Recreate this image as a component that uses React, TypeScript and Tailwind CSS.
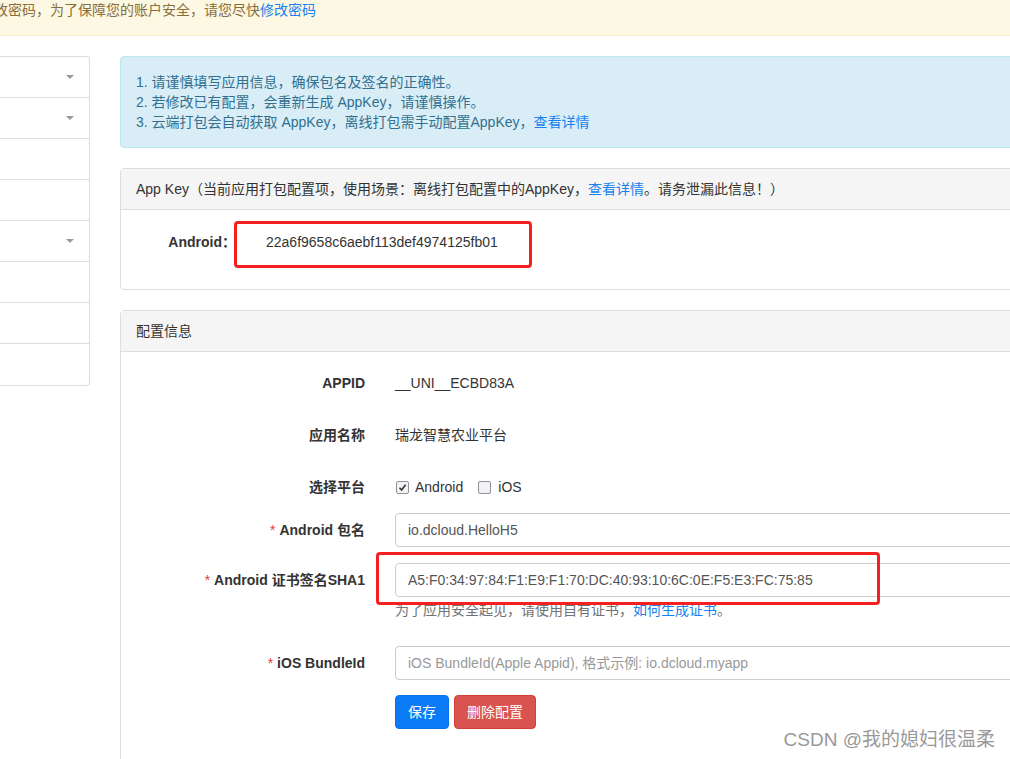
function Caret() {
  return (
    <span className="block w-0 h-0 border-x-[4px] border-x-transparent border-t-[4px] border-t-[#999]" />
  );
}

function CheckBox({ checked }: { checked?: boolean }) {
  return (
    <span className="inline-flex items-center justify-center w-[13px] h-[13px] rounded-[2px] border border-[#8f8f9d] bg-[#f2f2f2]">
      {checked && (
        <svg width="9" height="9" viewBox="0 0 9 9">
          <path d="M1.5 4.8 L3.6 7 L7.6 1.8" fill="none" stroke="#333" strokeWidth="1.6" />
        </svg>
      )}
    </span>
  );
}

const sideRows = [true, true, false, false, true, false, false, false];

export default function App() {
  return (
    <div
      className="relative w-[1010px] h-[759px] overflow-hidden bg-white text-[14px] text-[#333]"
      style={{ fontFamily: '"Liberation Sans", Arial, "Noto Sans CJK SC", sans-serif' }}
    >
      {/* warning bar */}
      <div className="h-[36px] bg-[#fcf8e3] border-b border-[#faebcc] text-[#8a6d3b] flex items-start leading-[20px] overflow-hidden whitespace-nowrap">
        <span className="-ml-[6px]">
          改密码，为了保障您的账户安全，请您尽快<span className="text-[#1782f0]">修改密码</span>
        </span>
      </div>

      <div className="flex mt-[20px] items-start">
        {/* sidebar */}
        <div className="w-[90px] shrink-0 border-r border-t border-b border-[#ddd] rounded-br-[4px] rounded-tr-[2px]">
          {sideRows.map((caret, i) => (
            <div
              key={i}
              className={`h-[41px] flex items-center justify-end pr-[15px] ${i < sideRows.length - 1 ? "border-b border-[#ddd]" : ""}`}
            >
              {caret && <Caret />}
            </div>
          ))}
        </div>

        {/* main */}
        <div className="ml-[30px] w-[1000px] shrink-0">
          <div className="bg-[#d9edf7] border border-[#bce8f1] rounded-[4px] text-[#31708f] px-[15px] py-[15px] leading-[20px]">
            <div>1. 请谨慎填写应用信息，确保包名及签名的正确性。</div>
            <div>2. 若修改已有配置，会重新生成 AppKey，请谨慎操作。</div>
            <div>
              3. 云端打包会自动获取 AppKey，离线打包需手动配置AppKey，<span className="text-[#1782f0]">查看详情</span>
            </div>
          </div>

          {/* App Key panel */}
          <div className="mt-[20px] border border-[#ddd] rounded-[4px]">
            <div className="bg-[#f5f5f5] border-b border-[#ddd] px-[15px] py-[10px] leading-[20px]">
              App Key（当前应用打包配置项，使用场景：离线打包配置中的AppKey，<span className="text-[#1782f0]">查看详情</span>。请务泄漏此信息！）
            </div>
            <div className="px-[15px] pt-[15px] pb-[30px]">
              <div className="flex items-center h-[34px]">
                <div className="w-[100px] text-right font-bold">Android：</div>
                <div className="relative ml-[30px]">
                  22a6f9658c6aebf113def4974125fb01
                  <span className="absolute left-[-32px] top-[-11px] w-[298px] h-[47px] border-[3px] border-[#f5201f] rounded-[4px]" />
                </div>
              </div>
            </div>
          </div>

          {/* config panel */}
          <div className="mt-[20px] border border-[#ddd] rounded-[4px] h-[500px]">
            <div className="bg-[#f5f5f5] border-b border-[#ddd] px-[15px] py-[10px] leading-[20px]">配置信息</div>
            <div className="px-[15px] pt-[5px]">
              <div className="flex items-center h-[52px]">
                <div className="w-[244px] pr-[15px] text-right font-bold">APPID</div>
                <div className="pl-[15px]">__UNI__ECBD83A</div>
              </div>
              <div className="flex items-center h-[52px]">
                <div className="w-[244px] pr-[15px] text-right font-bold">应用名称</div>
                <div className="pl-[15px]">瑞龙智慧农业平台</div>
              </div>
              <div className="flex items-center h-[52px]">
                <div className="w-[244px] pr-[15px] text-right font-bold">选择平台</div>
                <div className="pl-[16px] flex items-center">
                  <CheckBox checked />
                  <span className="ml-[6px]">Android</span>
                  <span className="ml-[15px] flex items-center">
                    <CheckBox />
                  </span>
                  <span className="ml-[7px]">iOS</span>
                </div>
              </div>

              <div className="flex items-center">
                <div className="w-[244px] pr-[15px] text-right font-bold">
                  <span className="text-[#e4393c] font-normal">* </span>Android 包名
                </div>
                <div className="pl-[15px] flex-1">
                  <div className="h-[34px] border border-[#ccc] rounded-[4px] px-[12px] flex items-center text-[#555]">
                    io.dcloud.HelloH5
                  </div>
                </div>
              </div>

              <div className="flex items-start mt-[16px]">
                <div className="w-[244px] pr-[15px] text-right font-bold h-[34px] flex items-center justify-end">
                  <span className="text-[#e4393c] font-normal mr-[4px]">*</span>Android 证书签名SHA1
                </div>
                <div className="pl-[15px] flex-1 relative">
                  <div className="h-[34px] border border-[#ccc] rounded-[4px] px-[12px] flex items-center text-[#555]">
                    A5:F0:34:97:84:F1:E9:F1:70:DC:40:93:10:6C:0E:F5:E3:FC:75:85
                  </div>
                  <div className="mt-[3px] leading-[20px] text-[#737373]">
                    为了应用安全起见，请使用自有证书，<span className="text-[#1782f0]">如何生成证书</span>。
                  </div>
                  <span className="absolute left-[-4px] top-[-11px] w-[504px] h-[53px] border-[3px] border-[#f5201f] rounded-[4px]" />
                </div>
              </div>

              <div className="flex items-center mt-[26px]">
                <div className="w-[244px] pr-[15px] text-right font-bold">
                  <span className="text-[#e4393c] font-normal">* </span>iOS BundleId
                </div>
                <div className="pl-[15px] flex-1">
                  <div className="h-[34px] border border-[#ccc] rounded-[4px] px-[12px] flex items-center text-[#999]">
                    iOS BundleId(Apple Appid), 格式示例: io.dcloud.myapp
                  </div>
                </div>
              </div>

              <div className="flex mt-[15px] pl-[259px] gap-[5px]">
                <button className="h-[34px] px-[12px] rounded-[4px] bg-[#0a7bf5] border border-[#0a74e6] text-white">保存</button>
                <button className="h-[34px] px-[12px] rounded-[4px] bg-[#d9534f] border border-[#d43f3a] text-white">删除配置</button>
              </div>
            </div>
          </div>
        </div>
      </div>

      <div className="absolute right-[15px] top-[728px] text-[19px] leading-[24px] text-[#999]">CSDN @我的媳妇很温柔</div>
    </div>
  );
}
